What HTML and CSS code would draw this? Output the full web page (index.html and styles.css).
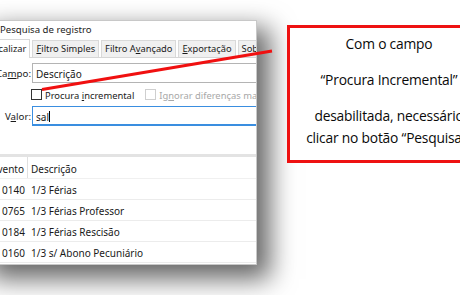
FILE: index.html
```html
<!DOCTYPE html>
<html lang="pt">
<head>
<meta charset="utf-8">
<title>Pesquisa de registro</title>
<link rel="stylesheet" href="styles.css">
</head>
<body>
<div class="page">
  <div class="window">
    <div class="title">Pesquisa de registro</div>
    <div class="tabs">
      <div class="tab active">Localizar</div>
      <div class="tab"><u>F</u>iltro Simples</div>
      <div class="tab">Filtro A<u>v</u>ançado</div>
      <div class="tab"><u>E</u>xportação</div>
      <div class="tab">Sobre</div>
    </div>
    <div class="panel">
      <div class="field">
        <span class="label">Ca<u>m</u>po:</span>
        <div class="input">Descrição</div>
      </div>
      <div class="checks">
        <span class="box"></span>
        <span class="chk">Procura <u>i</u>ncremental</span>
        <span class="box disabled"></span>
        <span class="chk disabled">Ig<u>n</u>orar diferenças maiúsculas</span>
      </div>
      <div class="field">
        <span class="label">V<u>a</u>lor:</span>
        <div class="input focus">sal<span class="caret"></span></div>
      </div>
    </div>
    <div class="grid">
      <div class="grow head"><span class="c1">Evento</span><span class="c2">Descrição</span></div>
      <div class="grow"><span class="c1">0140</span><span class="c2">1/3 Férias</span></div>
      <div class="grow"><span class="c1">0765</span><span class="c2">1/3 Férias Professor</span></div>
      <div class="grow"><span class="c1">0184</span><span class="c2">1/3 Férias Rescisão</span></div>
      <div class="grow"><span class="c1">0160</span><span class="c2">1/3 s/ Abono Pecuniário</span></div>
    </div>
  </div>
  <svg class="arrow" width="460" height="295" viewBox="0 0 460 295">
    <line x1="42" y1="89.5" x2="272" y2="51" stroke="#f01010" stroke-width="3"/>
  </svg>
  <div class="note">
    <p>Com o campo</p>
    <p>“Procura Incremental”</p>
    <p>desabilitada, necessário<br>clicar no botão “Pesquisar”</p>
  </div>
</div>
</body>
</html>
```
FILE: styles.css
```css
html, body {
  margin: 0;
  padding: 0;
  background: #fff;
}
.page {
  position: relative;
  width: 460px;
  height: 295px;
  overflow: hidden;
  background: #fff;
}
.window {
  margin-left: -17px;
  margin-top: 20px;
  width: 274px;
  height: 245px;
  background: #fff;
  border: 1px solid #c8c8c8;
  border-left: none;
  box-sizing: border-box;
  box-shadow: 10px 11px 24px 3px rgba(0,0,0,0.6);
  font-family: "Noto Sans", sans-serif;
  font-size: 10px;
  color: #1a1a1a;
  display: flex;
  flex-direction: column;
  overflow: hidden;
}
u { text-decoration: underline; text-underline-offset: 1px; }
.title {
  height: 18px;
  line-height: 18px;
  padding-left: 17px;
  font-size: 9.6px;
  color: #222;
}
.tabs {
  height: 19px;
  display: flex;
  align-items: flex-end;
  gap: 2px;
  padding-left: 1px;
  border-bottom: 1px solid #d6d6d6;
  box-sizing: border-box;
  font-size: 9.3px;
}
.tab {
  height: 17px;
  line-height: 16px;
  padding: 0 3px;
  background: #f0f0f0;
  border: 1px solid #d9d9d9;
  border-bottom: none;
  box-sizing: border-box;
  white-space: nowrap;
}
.tab.active {
  background: #fff;
  height: 19px;
  line-height: 18px;
  margin-bottom: -1px;
}
.panel {
  height: 99px;
  padding-top: 5px;
  box-sizing: border-box;
  border-bottom: 3px solid #e3e3e3;
}
.field {
  display: flex;
  align-items: center;
  height: 20px;
}
.label {
  width: 49px;
  text-align: right;
  padding-right: 1px;
  box-sizing: border-box;
  padding-top: 1px;
  font-size: 9.7px;
}
.input {
  flex: 1;
  height: 20px;
  line-height: 19px;
  padding-top: 1px;
  border: 1px solid #b4b4b4;
  border-right: none;
  box-sizing: border-box;
  padding-left: 3px;
  white-space: nowrap;
}
.input.focus {
  border-color: #3a8ee0;
  border-width: 1px 0 2px 1px;
}
.caret {
  display: inline-block;
  width: 1px;
  height: 11px;
  background: #000;
  vertical-align: -1px;
}
.checks {
  display: flex;
  align-items: center;
  height: 23px;
  padding-left: 48px;
  white-space: nowrap;
  font-size: 9.4px;
}
.chk { padding-top: 1px; }
.box {
  width: 11px;
  height: 11px;
  border: 1px solid #333;
  box-sizing: border-box;
  margin-right: 3px;
  flex: none;
}
.box.disabled {
  border-color: #cfcfcf;
  margin-left: 11px;
}
.chk.disabled { color: #a8a8a8; }
.grid {
  flex: 1;
}
.grow {
  display: flex;
  height: 21px;
  line-height: 19px;
  padding-top: 2px;
  border-bottom: 1px solid #ececec;
  box-sizing: border-box;
}
.grow.head {
  height: 22px;
  line-height: 21px;
  border-bottom: 1px solid #f0f0f0;
}
.c1 {
  width: 45px;
  text-align: right;
  padding-right: 3px;
  box-sizing: border-box;
  flex: none;
}
.head .c1 { border-right: 1px solid #e0e0e0; margin-top: -2px; padding-top: 2px; }
.c2 { padding-left: 3px; }
.arrow {
  position: absolute;
  left: 0;
  top: 0;
}
.note {
  position: absolute;
  left: 287px;
  top: 25px;
  width: 204px;
  height: 138px;
  border: 3px solid #ee1111;
  box-sizing: border-box;
  background: #fff;
  font-family: "Open Sans", sans-serif;
  font-size: 13.8px;
  letter-spacing: -0.2px;
  color: #0a0a0a;
  text-align: center;
  padding: 5px 0 0;
  white-space: nowrap;
}
.note p {
  margin: 0 0 14px;
  line-height: 22px;
}
```
